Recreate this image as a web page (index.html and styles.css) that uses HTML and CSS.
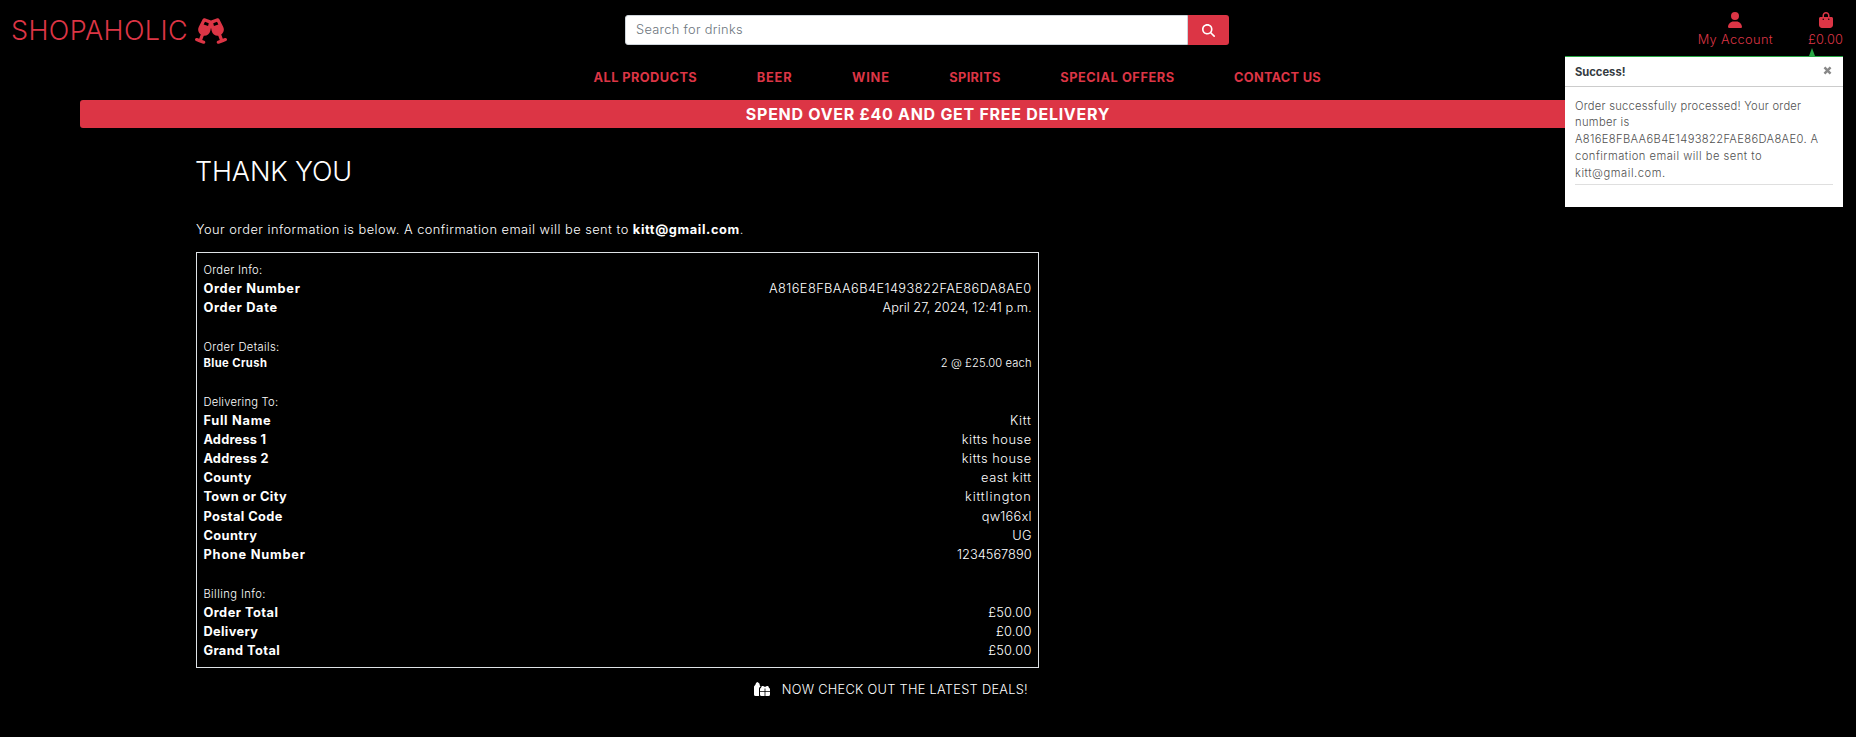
FILE: index.html
```html
<!DOCTYPE html>
<html lang="en">
<head>
<meta charset="utf-8">
<title>Shopaholic</title>
<link rel="stylesheet" href="styles.css">
</head>
<body>
<header class="top">
  <a class="logo"><span>SHOPAHOLIC</span>
    <svg class="glasses" viewBox="0 0 640 512"><path d="M155.6 17.3C163 3 179.9-3.6 195 1.9L320 47.5l125-45.6c15.1-5.5 32 1.1 39.4 15.4l78.8 152.9c28.8 55.8 10.3 122.3-38.5 156.6L556.1 413l41-15c16.6-6 35 2.5 41 19.1s-2.5 35-19.1 41l-71.1 25.9L476.8 510c-16.6 6.1-35-2.5-41-19.1s2.5-35 19.1-41l41-15-31.3-86.2c-59.4 5.2-116.2-34-130-95.2L320 188.8l-14.6 64.7c-13.8 61.3-70.6 100.4-130 95.2l-31.3 86.2 41 15c16.6 6 25.2 24.4 19.1 41s-24.4 25.2-41 19.1L92.2 484.1 21.1 458.2c-16.6-6.1-25.2-24.4-19.1-41s24.4-25.2 41-19.1l41 15 31.3-86.2C66.5 292.5 48.1 226 76.9 170.2L155.6 17.3zm44 54.4l-27.2 52.8L261.6 157l13.1-57.9L199.6 71.7zm240.9 0L365.4 99.1 378.5 157l89.2-32.5L440.5 71.7z"/></svg>
  </a>
  <form class="search">
    <div class="field k31">Search for drinks</div>
    <div class="go"><svg viewBox="0 0 512 512"><path d="M416 208c0 45.9-14.9 88.3-40 122.7L502.6 457.4c12.5 12.5 12.5 32.8 0 45.3s-32.8 12.5-45.3 0L330.7 376c-34.4 25.2-76.8 40-122.7 40C93.1 416 0 322.9 0 208S93.1 0 208 0S416 93.1 416 208zM208 352a144 144 0 1 0 0-288 144 144 0 1 0 0 288z"/></svg></div>
  </form>
  <div class="account">
    <a><svg viewBox="0 0 448 512"><path d="M224 256A128 128 0 1 0 224 0a128 128 0 1 0 0 256zm-45.7 48C79.8 304 0 383.8 0 482.3C0 498.7 13.3 512 29.7 512H418.3c16.4 0 29.7-13.3 29.7-29.7C448 383.8 368.2 304 269.7 304H178.3z"/></svg><span class="k38">My Account</span></a>
    <a><svg class="bag" viewBox="0 0 448 512"><path d="M160 112c0-35.3 28.7-64 64-64s64 28.7 64 64v48H160V112zm-48 48H48c-26.5 0-48 21.5-48 48V416c0 53 43 96 96 96H352c53 0 96-43 96-96V208c0-26.5-21.5-48-48-48H336V112C336 50.1 285.9 0 224 0S112 50.1 112 112v48zm24 48a24 24 0 1 1 0 48 24 24 0 1 1 0-48zm152 24a24 24 0 1 1 48 0 24 24 0 1 1 -48 0z"/></svg><span class="k1">£0.00</span></a>
  </div>
</header>
<nav class="menu">
  <a class="k42">ALL PRODUCTS</a><a class="k86">BEER</a><a class="k86">WINE</a><a class="k31">SPIRITS</a><a class="k54">SPECIAL OFFERS</a><a class="k26">CONTACT US</a>
</nav>
<div class="banner k71">SPEND OVER £40 AND GET FREE DELIVERY</div>
<main class="content">
  <h2>THANK YOU</h2>
  <p class="intro k47">Your order information is below. A confirmation email will be sent to <strong class="k62">kitt@gmail.com</strong>.</p>
  <div class="order">
    <section>
      <small class="k31">Order Info:</small>
      <div class="row"><b class="k66">Order Number</b><span class="k42">A816E8FBAA6B4E1493822FAE86DA8AE0</span></div>
      <div class="row"><b class="k66">Order Date</b><span class="k02">April 27, 2024, 12:41 p.m.</span></div>
    </section>
    <section>
      <small class="k38">Order Details:</small>
      <div class="row item"><b class="k42">Blue Crush</b><span class="k1">2 @ £25.00 each</span></div>
    </section>
    <section>
      <small class="k26">Delivering To:</small>
      <div class="row"><b class="k71">Full Name</b><span class="k71">Kitt</span></div>
      <div class="row"><b class="k22">Address 1</b><span class="k54">kitts house</span></div>
      <div class="row"><b class="k22">Address 2</b><span class="k54">kitts house</span></div>
      <div class="row"><b class="k38">County</b><span class="k54">east kitt</span></div>
      <div class="row"><b class="k42">Town or City</b><span class="k86">kittlington</span></div>
      <div class="row"><b class="k42">Postal Code</b><span class="k22">qw166xl</span></div>
      <div class="row"><b class="k42">Country</b><span class="k2">UG</span></div>
      <div class="row"><b class="k75">Phone Number</b><span class="k02">1234567890</span></div>
    </section>
    <section>
      <small class="k42">Billing Info:</small>
      <div class="row"><b class="k47">Order Total</b><span class="k22">£50.00</span></div>
      <div class="row"><b class="k38">Delivery</b><span class="k22">£0.00</span></div>
      <div class="row"><b class="k42">Grand Total</b><span class="k22">£50.00</span></div>
    </section>
  </div>
  <a class="deals">
    <svg viewBox="0 0 16 14"><path d="M0 4.500L1.500 2.500 2 1 3.300 0 4.500.8 5.500 1.800 5.800 3.500 6.600 4.500C5.500 5 5 6 5 7V14H1.500Q0 14 0 12.500zM6 7.500Q6 6 7.200 5.800C6.800 4 9 3.200 11 5 13 3.200 15.200 4 14.800 5.800Q16 6 16 7.500V9H11.400V6.500H10.600V9H6zM6 9.800H10.600V14H7.500Q6 14 6 12.500zM11.400 9.800H16V12.500Q16 14 14.500 14H11.400z"/></svg>
    <span class="k27">NOW CHECK OUT THE LATEST DEALS!</span>
  </a>
</main>
<aside class="toast">
  <i class="arrow"></i>
  <div class="toast-head"><strong>Success!</strong><svg viewBox="0 0 8 8"><path d="M1.300 1.300L6.700 6.700M6.700 1.300L1.300 6.700"/></svg></div>
  <div class="toast-body">
    <p><span class="k26">Order successfully processed! Your order</span><br><span class="k31">number is</span><br><span class="k34">A816E8FBAA6B4E1493822FAE86DA8AE0. A</span><br><span class="k47">confirmation email will be sent to</span><br><span class="k54">kitt@gmail.com.</span></p>
  </div>
</aside>
</body>
</html>
```
FILE: styles.css
```css
* { box-sizing: border-box; }
body {
  margin: 0;
  min-height: 737px;
  background: #000;
  color: #fff;
  font: 350 12.8px/19.2px Inter, "Open Sans", sans-serif;
}
a { color: #dc3545; }
svg { display: block; fill: currentColor; }

/* letter spacing steps */
.k02 { letter-spacing: .02px; }
.k1 { letter-spacing: .1px; }
.k2 { letter-spacing: .2px; }
.k22 { letter-spacing: .22px; }
.k26 { letter-spacing: .25px; }
.k27 { letter-spacing: .29px; }
.k31 { letter-spacing: .32px; }
.k34 { letter-spacing: .34px; }
.k38 { letter-spacing: .38px; }
.k42 { letter-spacing: .42px; }
.k47 { letter-spacing: .48px; }
.k54 { letter-spacing: .54px; }
.k62 { letter-spacing: .62px; }
.k66 { letter-spacing: .68px; }
.k71 { letter-spacing: .72px; }
.k75 { letter-spacing: .77px; }
.k86 { letter-spacing: .86px; }

.top {
  display: grid;
  grid-template-columns: 1fr 604px 1fr;
  height: 60px;
  padding: 0 13px 0 11px;
}
.logo {
  display: flex;
  align-items: center;
  gap: 7px;
  height: 61px;
  font-size: 27px;
  font-weight: 300;
  letter-spacing: .38px;
}
.glasses { width: 32px; height: 26px; }
.search { display: flex; height: 30px; margin: 15px 0 0; }
.field {
  flex: 1;
  padding: 4px 10px;
  border: 1px solid #ced4da;
  border-radius: 3px 0 0 3px;
  background: #fff;
  color: #6c757d;
}
.go {
  display: grid;
  place-items: center;
  width: 41px;
  border-radius: 0 3px 3px 0;
  background: #dc3545;
}
.go svg { width: 13px; height: 13px; }
.account { display: flex; justify-content: flex-end; gap: 35px; padding-top: 12px; }
.account a { display: flex; flex-direction: column; align-items: center; gap: 2px; }
.account svg { width: 14px; height: 16px; }
.account .bag { margin-left: 1px; }

.menu { display: flex; gap: 59.500px; height: 40px; padding: 8px 0 0 593.500px; font-weight: 650; }
.banner {
  height: 28px;
  margin: 0 80px;
  border-radius: 3px;
  background: #dc3545;
  font-size: 16px;
  font-weight: 700;
  line-height: 28px;
  text-align: center;
}

.content { width: 843px; margin-left: 196px; padding-top: 28px; }
h2 { margin: 0 0 0 -1px; font-size: 27px; font-weight: 300; line-height: 32px; letter-spacing: -.15px; }
.intro { margin: 32px 0 12.800px; }
.order {
  display: flex;
  flex-direction: column;
  gap: 19.200px;
  padding: 6.400px;
  border: 1px solid #dee2e6;
}
small { display: block; padding-top: 2.400px; font-size: 11.200px; line-height: 16.800px; }
.row { display: flex; justify-content: space-between; }
.row b { font-weight: 700; }
.item { font-size: 11.200px; line-height: 16.800px; }
.deals { display: flex; align-items: center; justify-content: flex-end; gap: 12px; padding: 12px 11px 0 0; color: #fff; }
.deals svg { width: 16px; height: 14px; }

.toast {
  position: absolute;
  top: 56px;
  right: 13px;
  width: 278px;
  height: 151px;
  border-top: 1px solid #28a745;
  background: #fff;
  color: #505050;
  font-size: 11.200px;
  line-height: 16.800px;
}
.arrow {
  position: absolute;
  top: -9px;
  left: 244px;
  border: solid transparent;
  border-width: 0 3px 8px;
  border-bottom-color: #28a745;
}
.toast-head {
  display: flex;
  justify-content: space-between;
  height: 30px;
  padding: 7px 10px 0;
  border-bottom: 1px solid #ccc;
  color: #343a40;
}
.toast-head svg { width: 9px; height: 9px; margin: 2px 1px 0 0; stroke: #888; stroke-width: 2.200; }
.toast-body { padding: 10.500px 10px 0; }
.toast-body p { margin: 0; padding-bottom: 2.500px; border-bottom: 1px solid #dfdfdf; }
```
